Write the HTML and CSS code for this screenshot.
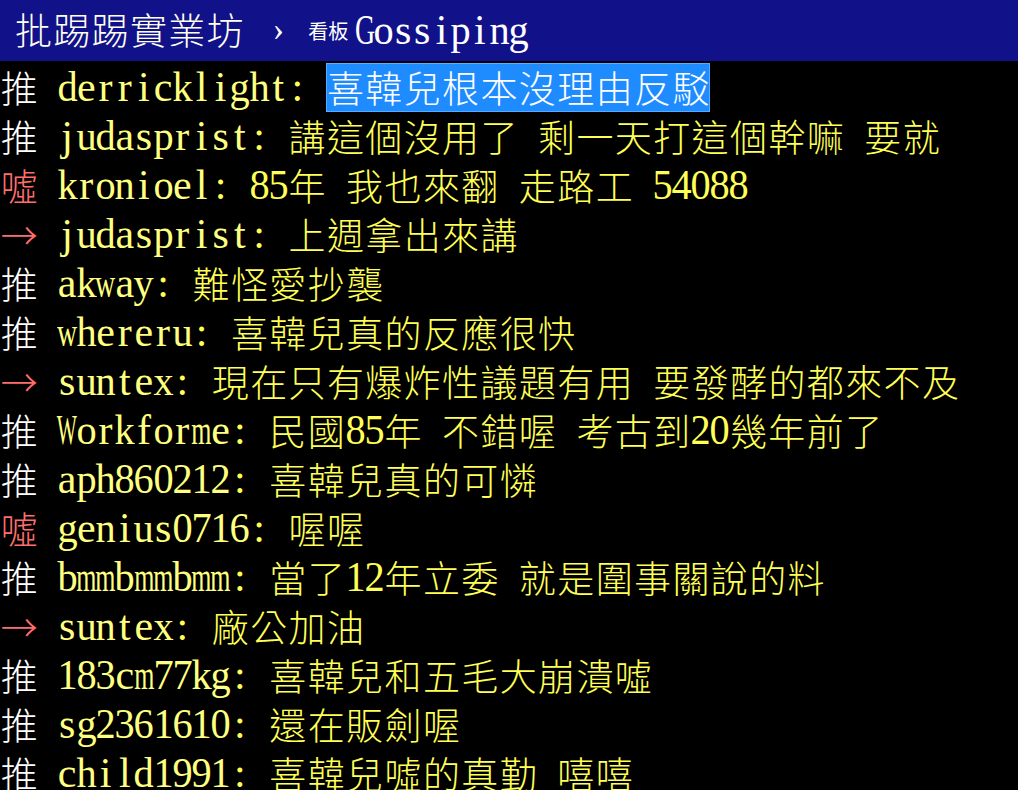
FILE: index.html
```html
<!DOCTYPE html>
<html lang="zh-Hant">

<head>
    <meta charset="UTF-8">
    <meta name="viewport" content="width=device-width, initial-scale=1.0">
    <title>批踢踢實業坊 - Gossiping</title>
    <link rel="stylesheet" href="styles.css">
</head>

<body>

<div class="term">
    <div class="topbar">
        <span class="site">批踢踢實業坊</span>
        <span class="sep">›</span>
        <span class="board-label">看板</span>
        <span class="board" id="boardName">Gossiping</span>
    </div>

    <div class="push-list" id="pushList">
        <!-- push lines are drawn here cell by cell -->
    </div>
</div>

<script>
    const CELL = 19.2;

    const pushes = [
        { tag: '推', user: 'derricklight', text: '喜韓兒根本沒理由反駁', selected: true },
        { tag: '推', user: 'judasprist', text: '講這個沒用了 剩一天打這個幹嘛 要就' },
        { tag: '噓', user: 'kronioel', text: '85年 我也來翻 走路工 54088' },
        { tag: '→', user: 'judasprist', text: '上週拿出來講' },
        { tag: '推', user: 'akway', text: '難怪愛抄襲' },
        { tag: '推', user: 'whereru', text: '喜韓兒真的反應很快' },
        { tag: '→', user: 'suntex', text: '現在只有爆炸性議題有用 要發酵的都來不及' },
        { tag: '推', user: 'Workforme', text: '民國85年 不錯喔 考古到20幾年前了' },
        { tag: '推', user: 'aph860212', text: '喜韓兒真的可憐' },
        { tag: '噓', user: 'genius0716', text: '喔喔' },
        { tag: '推', user: 'bmmbmmbmm', text: '當了12年立委 就是圍事關說的料' },
        { tag: '→', user: 'suntex', text: '廠公加油' },
        { tag: '推', user: '183cm77kg', text: '喜韓兒和五毛大崩潰噓' },
        { tag: '推', user: 'sg2361610', text: '還在販劍喔' },
        { tag: '推', user: 'child1991', text: '喜韓兒噓的真勤 嘻嘻' }
    ];

    // full width glyphs take two terminal columns
    function isWide(ch) {
        return ch.charCodeAt(0) > 0x2000;
    }

    function fillCells(parent, str) {
        for (const ch of str) {
            const cell = document.createElement('span');
            cell.className = isWide(ch) ? 'cell wide' : 'cell';
            const glyph = document.createElement('span');
            glyph.className = 'glyph';
            glyph.textContent = ch;
            cell.appendChild(glyph);
            parent.appendChild(cell);
        }
    }

    function tagClass(tag) {
        if (tag === '推') return 'push-tag up';
        if (tag === '噓') return 'push-tag boo';
        return 'push-tag arrow';
    }

    function renderPushes() {
        const list = document.getElementById('pushList');
        list.innerHTML = '';

        pushes.forEach(push => {
            const line = document.createElement('div');
            line.className = 'push';

            const tag = document.createElement('span');
            tag.className = tagClass(push.tag);
            fillCells(tag, push.tag + ' ');

            const user = document.createElement('span');
            user.className = 'push-userid';
            fillCells(user, push.user);

            const colon = document.createElement('span');
            colon.className = 'push-colon';
            fillCells(colon, ': ');

            const content = document.createElement('span');
            content.className = push.selected ? 'push-content selected' : 'push-content';
            fillCells(content, push.text);

            line.append(tag, user, colon, content);
            list.appendChild(line);
        });
    }

    // squeeze latin letters that are wider than one column
    function fitGlyphs() {
        document.querySelectorAll('.cell:not(.wide) .glyph').forEach(g => {
            const w = g.getBoundingClientRect().width;
            if (w > CELL * 1.05) {
                g.style.transform = `scaleX(${(CELL * 1.05 / w).toFixed(3)})`;
            }
        });
    }

    const board = document.getElementById('boardName');
    const boardText = board.textContent;
    board.textContent = '';
    fillCells(board, boardText);

    renderPushes();
    fitGlyphs();
</script>

</body>
</html>
```

FILE: styles.css
```css
body {
    margin: 0;
    padding: 0;
    background: #000;
}

.term {
    width: 1018px;
    height: 790px;
    overflow: hidden;
    background: #000;
}

.topbar {
    display: flex;
    align-items: center;
    height: 61px;
    padding-left: 15px;
    background-color: #11118a;
    color: #fff;
}

.site {
    font-family: "Noto Sans CJK TC", sans-serif;
    font-size: 37px;
    font-weight: 300;
    letter-spacing: 1.3px;
    color: #fffff0;
    position: relative;
    top: -2px;
}

.sep {
    font-family: "Liberation Serif", serif;
    font-size: 34px;
    margin-left: 28px;
    position: relative;
    top: -2px;
}

.board-label {
    font-family: "Noto Sans CJK TC", sans-serif;
    font-size: 20px;
    margin-left: 24px;
}

.board {
    display: flex;
    margin-left: 7px;
}

.board .cell {
    height: 61px;
    line-height: 60px;
}

.push-list {
    padding-top: 2px;
}

.push {
    display: flex;
    height: 49px;
}

.push-tag,
.push-userid,
.push-colon,
.push-content {
    display: flex;
}

.cell {
    display: flex;
    justify-content: center;
    flex: none;
    width: 19.2px;
    height: 49px;
    line-height: 49px;
    font-family: "Liberation Serif", serif;
    font-size: 42px;
    white-space: pre;
}

.cell.wide {
    width: 38.4px;
    font-family: "Noto Sans CJK TC", sans-serif;
    font-size: 37px;
    font-weight: 300;
}

.glyph {
    display: inline-block;
}

.push-tag.up {
    color: #fff;
}

.push-tag.boo,
.push-tag.arrow {
    color: #ff6e6e;
}

.push-userid {
    color: #ffff80;
}

.push-colon,
.push-content {
    color: #ffff55;
}

.push-content.selected {
    background-color: #1e8cff;
    box-shadow: inset 0 0 0 1px #56acff;
    color: #fff;
}
```
